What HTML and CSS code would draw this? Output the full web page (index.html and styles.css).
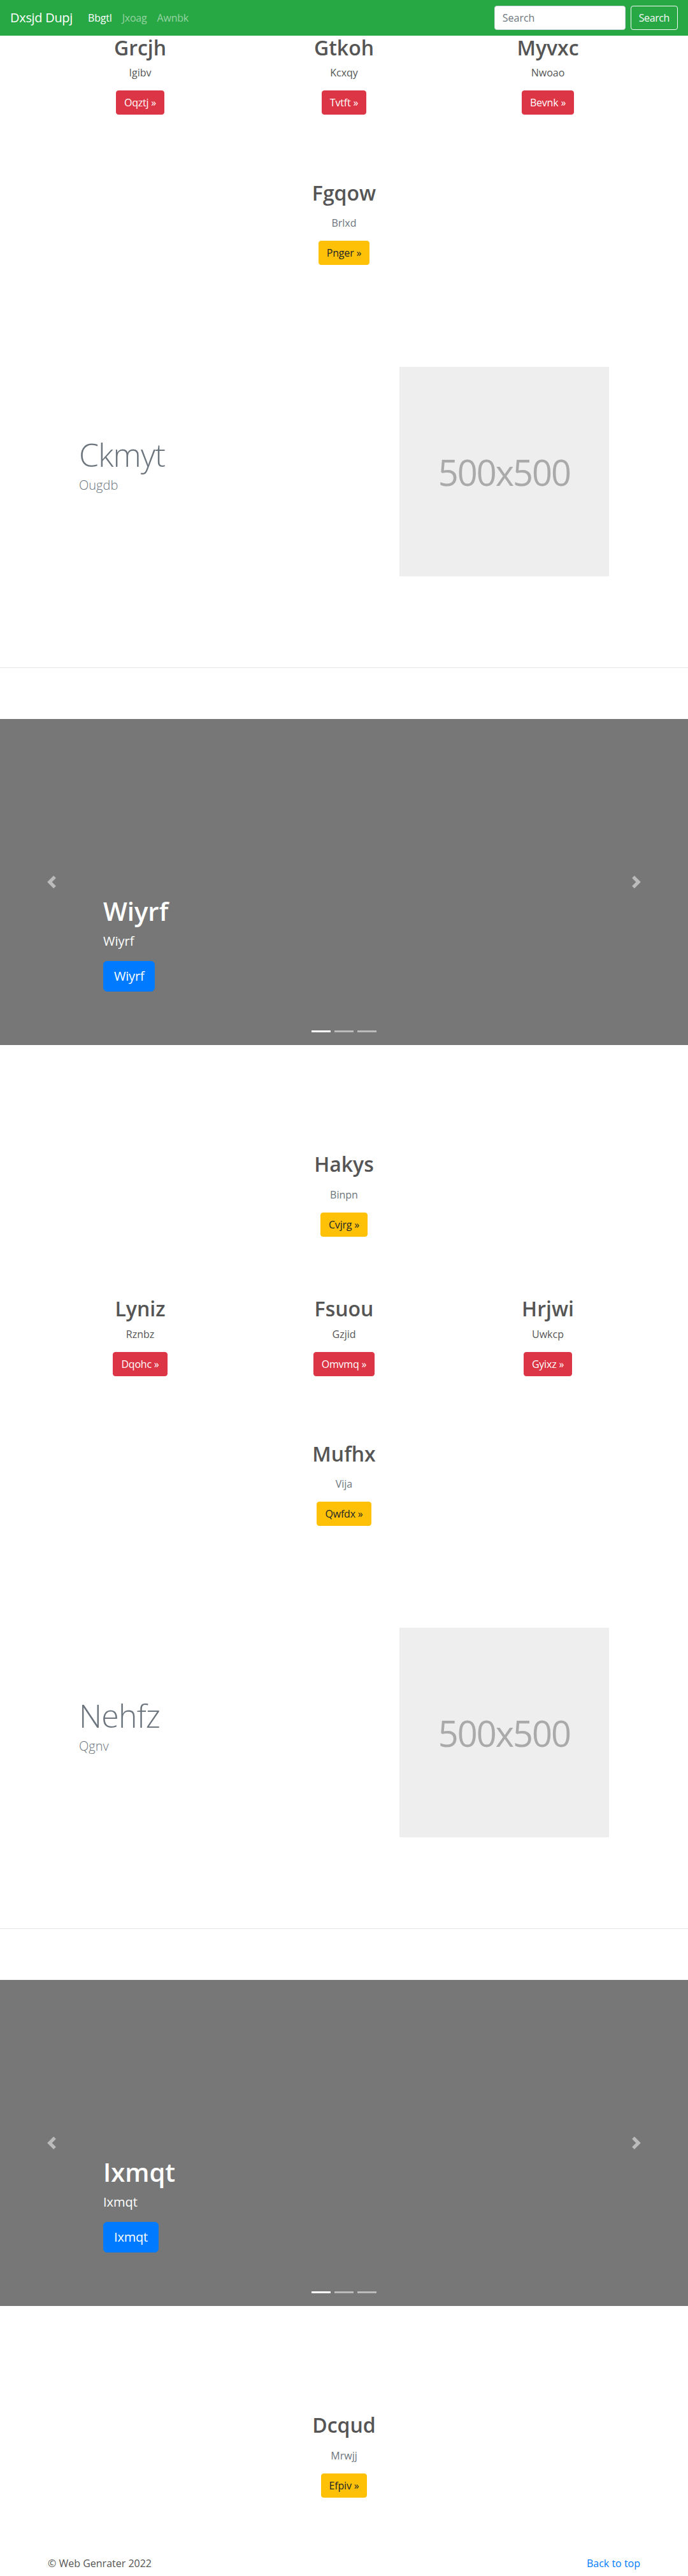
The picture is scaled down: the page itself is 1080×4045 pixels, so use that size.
FILE: index.html
```html
<!DOCTYPE html>
<html lang="en">
<head>
<meta charset="utf-8">
<title>Dxsjd Dupj</title>
<link rel="stylesheet" href="styles.css">
</head>
<body>
<header class="navbar">
  <a class="brand" href="#">Dxsjd Dupj</a>
  <nav class="nav">
    <a class="nav-link active" href="#">Bbgtl</a>
    <a class="nav-link" href="#">Jxoag</a>
    <a class="nav-link" href="#">Awnbk</a>
  </nav>
  <form class="search">
    <input class="search-input" type="text" placeholder="Search">
    <button class="search-btn" type="button">Search</button>
  </form>
</header>

<main>
  <section class="cols cols-top">
    <div class="feature">
      <h2 class="feature-title">Grcjh</h2>
      <p class="feature-text">Igibv</p>
      <p class="btn-wrap"><a class="btn btn-danger" href="#">Oqztj »</a></p>
    </div>
    <div class="feature">
      <h2 class="feature-title">Gtkoh</h2>
      <p class="feature-text">Kcxqy</p>
      <p class="btn-wrap"><a class="btn btn-danger" href="#">Tvtft »</a></p>
    </div>
    <div class="feature">
      <h2 class="feature-title">Myvxc</h2>
      <p class="feature-text">Nwoao</p>
      <p class="btn-wrap"><a class="btn btn-danger" href="#">Bevnk »</a></p>
    </div>
  </section>

  <section class="center-block">
    <h2 class="center-title">Fgqow</h2>
    <p class="center-text">Brlxd</p>
    <p class="btn-wrap"><a class="btn btn-warning" href="#">Pnger »</a></p>
  </section>

  <section class="featurette">
    <div class="featurette-copy">
      <h2 class="featurette-heading">Ckmyt</h2>
      <p class="featurette-lead">Ougdb</p>
    </div>
    <div class="featurette-media">
      <div class="placeholder"><span>500x500</span></div>
    </div>
  </section>

  <hr class="divider">

  <section class="carousel">
    <div class="carousel-caption">
      <h1 class="caption-title">Wiyrf</h1>
      <p class="caption-text">Wiyrf</p>
      <p class="btn-wrap"><a class="btn btn-lg btn-primary" href="#">Wiyrf</a></p>
    </div>
    <a class="carousel-control prev" href="#">
      <svg class="control-icon" viewBox="0 0 8 8" width="20" height="20"><path fill="#fff" d="M5.25 0l-4 4 4 4 1.5-1.5L4.25 4l2.5-2.5L5.25 0z"/></svg>
    </a>
    <a class="carousel-control next" href="#">
      <svg class="control-icon" viewBox="0 0 8 8" width="20" height="20"><path fill="#fff" d="M2.75 0l-1.5 1.5L3.75 4l-2.5 2.5L2.75 8l4-4-4-4z"/></svg>
    </a>
    <ol class="indicators">
      <li class="active"></li>
      <li></li>
      <li></li>
    </ol>
  </section>

  <section class="center-block after-carousel">
    <h2 class="center-title">Hakys</h2>
    <p class="center-text">Binpn</p>
    <p class="btn-wrap"><a class="btn btn-warning" href="#">Cvjrg »</a></p>
  </section>

  <section class="cols cols-mid">
    <div class="feature">
      <h2 class="feature-title">Lyniz</h2>
      <p class="feature-text">Rznbz</p>
      <p class="btn-wrap"><a class="btn btn-danger" href="#">Dqohc »</a></p>
    </div>
    <div class="feature">
      <h2 class="feature-title">Fsuou</h2>
      <p class="feature-text">Gzjid</p>
      <p class="btn-wrap"><a class="btn btn-danger" href="#">Omvmq »</a></p>
    </div>
    <div class="feature">
      <h2 class="feature-title">Hrjwi</h2>
      <p class="feature-text">Uwkcp</p>
      <p class="btn-wrap"><a class="btn btn-danger" href="#">Gyixz »</a></p>
    </div>
  </section>

  <section class="center-block">
    <h2 class="center-title">Mufhx</h2>
    <p class="center-text">Vija</p>
    <p class="btn-wrap"><a class="btn btn-warning" href="#">Qwfdx »</a></p>
  </section>

  <section class="featurette">
    <div class="featurette-copy">
      <h2 class="featurette-heading">Nehfz</h2>
      <p class="featurette-lead">Qgnv</p>
    </div>
    <div class="featurette-media">
      <div class="placeholder"><span>500x500</span></div>
    </div>
  </section>

  <hr class="divider">

  <section class="carousel">
    <div class="carousel-caption">
      <h1 class="caption-title">Ixmqt</h1>
      <p class="caption-text">Ixmqt</p>
      <p class="btn-wrap"><a class="btn btn-lg btn-primary" href="#">Ixmqt</a></p>
    </div>
    <a class="carousel-control prev" href="#">
      <svg class="control-icon" viewBox="0 0 8 8" width="20" height="20"><path fill="#fff" d="M5.25 0l-4 4 4 4 1.5-1.5L4.25 4l2.5-2.5L5.25 0z"/></svg>
    </a>
    <a class="carousel-control next" href="#">
      <svg class="control-icon" viewBox="0 0 8 8" width="20" height="20"><path fill="#fff" d="M2.75 0l-1.5 1.5L3.75 4l-2.5 2.5L2.75 8l4-4-4-4z"/></svg>
    </a>
    <ol class="indicators">
      <li class="active"></li>
      <li></li>
      <li></li>
    </ol>
  </section>

  <section class="center-block after-carousel">
    <h2 class="center-title">Dcqud</h2>
    <p class="center-text">Mrwjj</p>
    <p class="btn-wrap"><a class="btn btn-warning" href="#">Efpiv »</a></p>
  </section>
</main>

<footer class="footer">
  <p class="footer-copy">© Web Genrater 2022</p>
  <p class="footer-top"><a href="#">Back to top</a></p>
</footer>
</body>
</html>
```

FILE: styles.css
```css
* { box-sizing: border-box; }

html, body {
  margin: 0;
  padding: 0;
}

body {
  font-family: "Open Sans", "Noto Sans", "DejaVu Sans", sans-serif;
  font-size: 16px;
  line-height: 1.5;
  color: #555;
  background: #fff;
}

main { display: flow-root; }

a { text-decoration: none; }

/* Navbar */
.navbar {
  height: 56px;
  background: #28a745;
  display: flex;
  align-items: center;
  padding: 0 16px;
}

.brand {
  color: #fff;
  font-size: 20px;
  line-height: 30px;
  margin-right: 16px;
  white-space: nowrap;
  letter-spacing: -0.3px;
}

.nav {
  display: flex;
  flex: 1;
}

.nav-link {
  color: rgba(255, 255, 255, 0.5);
  padding: 8px;
  line-height: 24px;
  letter-spacing: -0.2px;
}

.nav-link.active { color: #fff; }

.search {
  display: flex;
  align-items: center;
}

.search-input {
  width: 206px;
  height: 38px;
  padding: 6px 12px;
  font-family: inherit;
  font-size: 16px;
  color: #495057;
  background: #fff;
  border: 1px solid #ced4da;
  border-radius: 4px;
  margin-right: 8px;
}

.search-input::placeholder { color: #6c757d; }

.search-btn {
  height: 38px;
  padding: 6px 12px;
  font-family: inherit;
  font-size: 16px;
  line-height: 24px;
  letter-spacing: -0.4px;
  color: #f8f9fa;
  background: transparent;
  border: 1px solid #f8f9fa;
  border-radius: 4px;
}

/* Buttons */
.btn {
  display: inline-block;
  padding: 6px 12px;
  font-size: 16px;
  line-height: 24px;
  border: 1px solid transparent;
  border-radius: 4px;
  letter-spacing: -0.2px;
}

.btn-danger { background: #dc3545; border-color: #dc3545; color: #fff; }
.btn-warning { background: #ffc107; border-color: #ffc107; color: #212529; }
.btn-primary { background: #007bff; border-color: #007bff; color: #fff; }

.btn-lg {
  padding: 8px 16px;
  font-size: 20px;
  line-height: 30px;
  border-radius: 6px;
}

.btn-wrap { margin: 0 0 16px; }

/* Three-column features */
.cols {
  max-width: 960px;
  margin: 0 auto;
  display: grid;
  grid-template-columns: repeat(3, 1fr);
  text-align: center;
}

.cols-mid { margin-top: 78.6px; }

.feature {
  padding: 0 15px;
  display: flow-root;
}

.feature-title {
  margin: 0 0 8px;
  font-size: 32px;
  line-height: 1.2;
  font-weight: 600;
  color: #555;
}

.feature-text { margin: 0 0 16px; color: #555; }

/* Centered block */
.center-block {
  display: flow-root;
  text-align: center;
  margin-top: 87.6px;
}

.center-block.after-carousel { margin-top: 168px; }

.center-title {
  margin: 0 0 16px;
  font-size: 32px;
  line-height: 1.2;
  font-weight: 600;
  color: #555;
}

.center-text {
  margin: 0 0 16px;
  color: #6c757d;
  font-weight: 400;
}

/* Featurette */
.featurette {
  max-width: 862px;
  margin: 143.6px auto 0;
  display: flex;
  align-items: center;
}

.featurette-copy {
  flex: 0 0 58.3333%;
  padding: 0 15px;
  display: flow-root;
}

.featurette-media {
  flex: 0 0 41.6667%;
  padding: 0 15px;
}

.featurette-heading {
  margin: 0 0 8px;
  font-size: 50px;
  line-height: 1;
  font-weight: 300;
  letter-spacing: -0.8px;
  color: #6c757d;
}

.featurette-lead {
  margin: 0 0 16px;
  font-size: 20px;
  line-height: 30px;
  font-weight: 300;
  color: #6c757d;
}

.placeholder {
  aspect-ratio: 1 / 1;
  background: #eee;
  display: flex;
  align-items: center;
  justify-content: center;
  color: #aaa;
  font-size: 56px;
  line-height: 1;
  letter-spacing: -2px;
}

.divider {
  margin: 143px 0 80px;
  border: 0;
  border-top: 1px solid rgba(0, 0, 0, 0.1);
  height: 0;
}

/* Carousel */
.carousel {
  position: relative;
  height: 512px;
  background: #777;
  overflow: hidden;
}

.carousel-caption {
  position: absolute;
  left: 15%;
  right: 15%;
  bottom: 48px;
  padding: 20px 0;
  color: #fff;
  text-align: left;
  z-index: 2;
}

.caption-title {
  margin: 0 0 8px;
  font-size: 40px;
  line-height: 1.2;
  font-weight: 600;
}

.caption-text {
  margin: 0 0 16px;
  font-size: 20px;
  line-height: 30px;
}

.carousel-control {
  position: absolute;
  top: 0;
  bottom: 0;
  width: 15%;
  display: flex;
  align-items: center;
  justify-content: center;
  opacity: 0.5;
}

.carousel-control.prev { left: 0; }
.carousel-control.next { right: 0; }

.control-icon { display: block; }

.indicators {
  position: absolute;
  left: 0;
  right: 0;
  bottom: 10px;
  margin: 0;
  padding: 0;
  list-style: none;
  display: flex;
  justify-content: center;
  z-index: 3;
}

.indicators li {
  width: 30px;
  height: 3px;
  margin: 10px 3px;
  background: #fff;
  opacity: 0.5;
}

.indicators li.active { opacity: 1; }

/* Footer */
.footer {
  max-width: 960px;
  margin: 75px auto 0;
  padding: 0 15px;
  display: flex;
  justify-content: space-between;
}

.footer p { margin: 0 0 6px; }

.footer-top a { color: #007bff; }
```
